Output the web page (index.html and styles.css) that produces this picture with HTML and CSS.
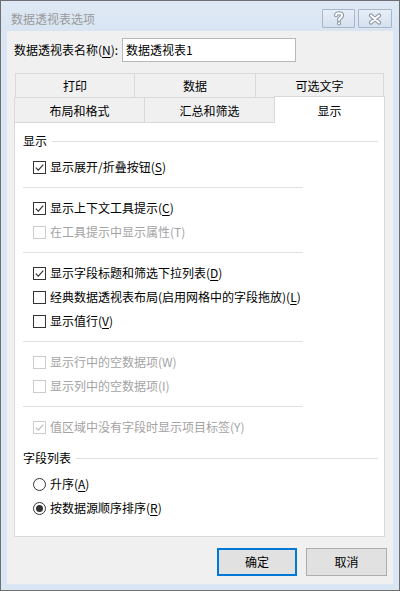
FILE: index.html
```html
<!DOCTYPE html>
<html lang="zh-CN">
<head>
<meta charset="utf-8">
<title>数据透视表选项</title>
<link rel="stylesheet" href="styles.css">
</head>
<body>
<div class="window">
  <div class="titlebar">
    <span class="title">数据透视表选项</span>
    <div class="tbtns">
      <button class="tb tb-help" aria-label="帮助">
        <svg width="12" height="15" viewBox="0 0 12 15"><path class="ol" d="M3 4.2 C3 1.6 9 1.6 9 4.4 C9 6.6 6 6.6 6 9" /><path class="ol" d="M6 12.2 L6 12.4"/><path class="in" d="M3 4.2 C3 1.6 9 1.6 9 4.4 C9 6.6 6 6.6 6 9" /><path class="in" d="M6 12.2 L6 12.4"/></svg>
      </button>
      <button class="tb tb-close" aria-label="关闭">
        <svg width="14" height="12" viewBox="0 0 14 12"><path class="ol" d="M3 2.5 L11 9.5 M11 2.5 L3 9.5"/><path class="in" d="M3 2.5 L11 9.5 M11 2.5 L3 9.5"/></svg>
      </button>
    </div>
  </div>
  <div class="frame">
    <div class="client">
      <div class="namerow">
        <label class="namelabel">数据透视表名称(<u>N</u>):</label>
        <div class="input">数据透视表1</div>
      </div>
      <div class="tabs">
        <div class="tabrow tabrow-top">
          <div class="tab t1">打印</div>
          <div class="tab t2">数据</div>
          <div class="tab t3">可选文字</div>
        </div>
        <div class="tabrow tabrow-bottom">
          <div class="tab b1">布局和格式</div>
          <div class="tab b2">汇总和筛选</div>
          <div class="tab b3 selected">显示</div>
        </div>
      </div>
      <div class="panel">
        <div class="grouplabel">显示</div>
        <div class="items first">
          <div class="row"><span class="cb on"><svg viewBox="0 0 11 11"><path d="M1.8 5.6 L4.3 8.1 L9.3 2.6"/></svg></span><span>显示展开/折叠按钮(<u>S</u>)</span></div>
          <div class="sep"></div>
          <div class="row"><span class="cb on"><svg viewBox="0 0 11 11"><path d="M1.8 5.6 L4.3 8.1 L9.3 2.6"/></svg></span><span>显示上下文工具提示(<u>C</u>)</span></div>
          <div class="row disabled"><span class="cb"></span><span>在工具提示中显示属性(T)</span></div>
          <div class="sep"></div>
          <div class="row"><span class="cb on"><svg viewBox="0 0 11 11"><path d="M1.8 5.6 L4.3 8.1 L9.3 2.6"/></svg></span><span>显示字段标题和筛选下拉列表(<u>D</u>)</span></div>
          <div class="row"><span class="cb"></span><span>经典数据透视表布局(启用网格中的字段拖放)(<u>L</u>)</span></div>
          <div class="row"><span class="cb"></span><span>显示值行(<u>V</u>)</span></div>
          <div class="sep"></div>
          <div class="row disabled"><span class="cb"></span><span>显示行中的空数据项(W)</span></div>
          <div class="row disabled"><span class="cb"></span><span>显示列中的空数据项(I)</span></div>
          <div class="sep"></div>
          <div class="row disabled"><span class="cb on"><svg viewBox="0 0 11 11"><path d="M1.8 5.6 L4.3 8.1 L9.3 2.6"/></svg></span><span>值区域中没有字段时显示项目标签(Y)</span></div>
        </div>
        <div class="grouplabel second">字段列表</div>
        <div class="items first">
          <div class="row"><span class="radio"></span><span>升序(<u>A</u>)</span></div>
          <div class="row"><span class="radio on"></span><span>按数据源顺序排序(<u>R</u>)</span></div>
        </div>
      </div>
      <div class="actions">
        <button class="btn default">确定</button>
        <button class="btn">取消</button>
      </div>
    </div>
  </div>
</div>
</body>
</html>
```
FILE: styles.css
```css
* { box-sizing: border-box; }

body {
  margin: 0;
  font-family: "Noto Sans CJK SC", "Noto Sans", sans-serif;
  font-size: 12px;
  line-height: 16px;
  color: #000;
}

u { text-decoration: underline; text-underline-offset: 2px; }

.window {
  width: 400px;
  height: 591px;
  border: 1px solid #6f6f6f;
  background: #dae6f4;
  display: flex;
  flex-direction: column;
}

.titlebar {
  height: 30px;
  flex: none;
  display: flex;
  align-items: flex-start;
  padding: 0 7px 0 10px;
  background: linear-gradient(#dfe9f5, #d9e5f3);
}

.title {
  margin-top: 10px;
  color: #9a9a9a;
  flex: 1;
}

.tbtns {
  display: flex;
  gap: 3px;
  margin-top: 8px;
}

.tb {
  height: 19px;
  padding: 0;
  border: 1px solid #a7b6c8;
  border-radius: 1px;
  background: linear-gradient(#e7eef7, #d5e1ef);
  display: flex;
  align-items: center;
  justify-content: center;
}
.tb-help { width: 33px; }
.tb-close { width: 34px; }

.tb svg { display: block; }
.tb .ol { fill: none; stroke: #8d98a6; stroke-width: 4.2; stroke-linecap: round; stroke-linejoin: round; }
.tb .in { fill: none; stroke: #ffffff; stroke-width: 2; stroke-linecap: round; stroke-linejoin: round; }

.frame {
  flex: 1;
  padding: 0 6px 6px 6px;
}

.client {
  height: 100%;
  background: #f0f0f0;
  padding: 7px 6px 0 7px;
  display: flex;
  flex-direction: column;
}

.namerow {
  display: flex;
  align-items: center;
  height: 24px;
}

.namelabel { width: 108px; }

.input {
  width: 174px;
  height: 24px;
  border: 1px solid #b8b8b8;
  background: #fff;
  padding: 3px 0 0 3px;
}

.tabs { margin-top: 11px; }

.tabrow { display: flex; }
.tabrow-top { margin-left: 1px; }

.tab {
  display: flex;
  align-items: center;
  justify-content: center;
  background: #f0f0f0;
  border: 1px solid #d9d9d9;
  border-bottom: none;
  border-left: none;
}
.t1, .b1 { border-left: 1px solid #d9d9d9; }

.tabrow-top .tab { height: 24px; padding-top: 1px; }
.t1 { width: 120px; }
.t2 { width: 121px; }
.t3 { width: 128px; }

.tabrow-bottom .tab { height: 25px; padding-top: 2px; }
.b1 { width: 131px; }
.b2 { width: 130px; }
.b3 { width: 110px; }

.tab.selected {
  background: #fff;
  height: 27px;
  margin-top: -1px;
  margin-bottom: -1px;
  margin-left: -1px;
  width: 111px;
  border-left: 1px solid #d9d9d9;
  position: relative;
  z-index: 1;
  padding-top: 1px;
}

.panel {
  width: 371px;
  height: 415px;
  background: #fff;
  border: 1px solid #d9d9d9;
  padding: 8px 6px 0 8px;
}

.grouplabel {
  height: 20px;
  display: flex;
  align-items: center;
}
.grouplabel::after {
  content: "";
  flex: 1;
  height: 1px;
  background: #e0e0e0;
  margin-left: 5px;
}
.grouplabel.second { margin-top: 9px; }

.items.first { margin-top: 4px; }

.row {
  height: 24px;
  display: flex;
  align-items: center;
  padding-left: 10px;
  gap: 4px;
  white-space: nowrap;
}
.row.disabled { color: #a3a3a3; }

.cb {
  width: 13px;
  height: 13px;
  border: 1px solid #333;
  background: #fff;
  flex: none;
  display: flex;
  align-items: center;
  justify-content: center;
}
.cb svg { width: 11px; height: 11px; display: block; }
.cb path { fill: none; stroke: #333; stroke-width: 1.2; }
.row.disabled .cb { border-color: #cccccc; }
.row.disabled .cb path { stroke: #bdbdbd; }

.radio {
  width: 13px;
  height: 13px;
  border: 1px solid #333;
  border-radius: 50%;
  background: #fff;
  flex: none;
  display: flex;
  align-items: center;
  justify-content: center;
}
.radio.on::after {
  content: "";
  width: 7px;
  height: 7px;
  border-radius: 50%;
  background: #333;
}

.sep {
  width: 280px;
  height: 1px;
  background: #e0e0e0;
  margin: 8px 0;
}

.actions {
  display: flex;
  justify-content: flex-end;
  gap: 9px;
  margin-top: 11px;
}

.btn {
  width: 81px;
  height: 28px;
  font: inherit;
  color: #000;
  background: #e1e1e1;
  border: 1px solid #adadad;
  padding: 0;
}
.btn.default {
  width: 80px;
  border: 2px solid #0078d7;
}
```
